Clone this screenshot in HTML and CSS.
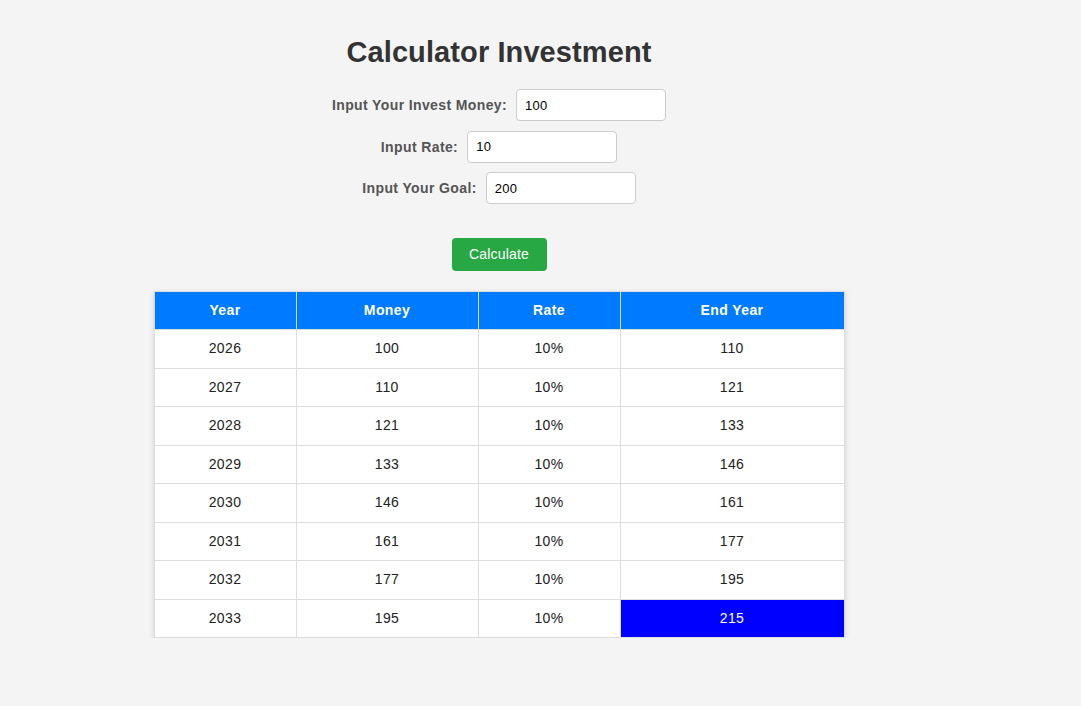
FILE: index.html
```html
<!DOCTYPE html>
<html>
<head>
<meta charset="utf-8">
<link rel="stylesheet" href="styles.css">
</head>
<body>
<div class="container">
  <h1 class="title">Calculator Investment</h1>
  <div class="form-row">
    <label class="label">Input Your Invest Money:</label>
    <input class="field" type="text" value="100">
  </div>
  <div class="form-row">
    <label class="label">Input Rate:</label>
    <input class="field" type="text" value="10">
  </div>
  <div class="form-row">
    <label class="label">Input Your Goal:</label>
    <input class="field" type="text" value="200">
  </div>
  <div class="actions">
    <button class="btn">Calculate</button>
  </div>
  <table class="result">
    <colgroup>
      <col class="c1"><col class="c2"><col class="c3"><col class="c4">
    </colgroup>
    <thead>
      <tr><th>Year</th><th>Money</th><th>Rate</th><th>End Year</th></tr>
    </thead>
    <tbody>
      <tr><td>2026</td><td>100</td><td>10%</td><td>110</td></tr>
      <tr><td>2027</td><td>110</td><td>10%</td><td>121</td></tr>
      <tr><td>2028</td><td>121</td><td>10%</td><td>133</td></tr>
      <tr><td>2029</td><td>133</td><td>10%</td><td>146</td></tr>
      <tr><td>2030</td><td>146</td><td>10%</td><td>161</td></tr>
      <tr><td>2031</td><td>161</td><td>10%</td><td>177</td></tr>
      <tr><td>2032</td><td>177</td><td>10%</td><td>195</td></tr>
      <tr><td>2033</td><td>195</td><td>10%</td><td class="goal">215</td></tr>
    </tbody>
  </table>
</div>
</body>
</html>
```
FILE: styles.css
```css
html, body {
  margin: 0;
  padding: 0;
  background: #f4f4f4;
  font-family: "Liberation Sans", Arial, sans-serif;
}
.container {
  width: 690px;
  margin-left: 154px;
  padding-top: 35px;
  display: flex;
  flex-direction: column;
  align-items: center;
}
.title {
  margin: 0 0 20px 0;
  font-size: 29px;
  font-weight: bold;
  color: #333;
  line-height: 34px;
  letter-spacing: 0.1px;
}
.form-row {
  display: flex;
  align-items: center;
  gap: 9px;
  margin-bottom: 9.5px;
}
.label {
  font-size: 14px;
  font-weight: bold;
  color: #555;
  letter-spacing: 0.38px;
}
.field {
  width: 150px;
  height: 32px;
  box-sizing: border-box;
  padding: 0 8px;
  border: 1px solid #ccc;
  border-radius: 4px;
  background: #fff;
  font-family: "Liberation Sans", Arial, sans-serif;
  font-size: 13px;
  letter-spacing: 0.3px;
  color: #000;
}
.actions {
  margin-top: 24px;
  margin-bottom: 20px;
}
.btn {
  width: 95px;
  height: 33px;
  background: #28a745;
  color: #fff;
  border: none;
  border-radius: 4px;
  font-family: "Liberation Sans", Arial, sans-serif;
  font-size: 14px;
  letter-spacing: 0.2px;
}
.result {
  width: 690px;
  table-layout: fixed;
  border-collapse: collapse;
  background: #fff;
  box-shadow: 0 2px 6px rgba(0,0,0,0.14);
  font-size: 14px;
  letter-spacing: 0.4px;
}
.result th, .result td {
  border: 1px solid #ddd;
  text-align: center;
  padding: 11px 0;
  line-height: 15.5px;
  color: #222;
}
.result th {
  background: #007bff;
  color: #fff;
  font-weight: bold;
}
.c1 { width: 142px; }
.c2 { width: 182px; }
.c3 { width: 142px; }
.c4 { width: 224px; }
.result td.goal {
  background: #0000ff;
  color: #fff;
}
```
